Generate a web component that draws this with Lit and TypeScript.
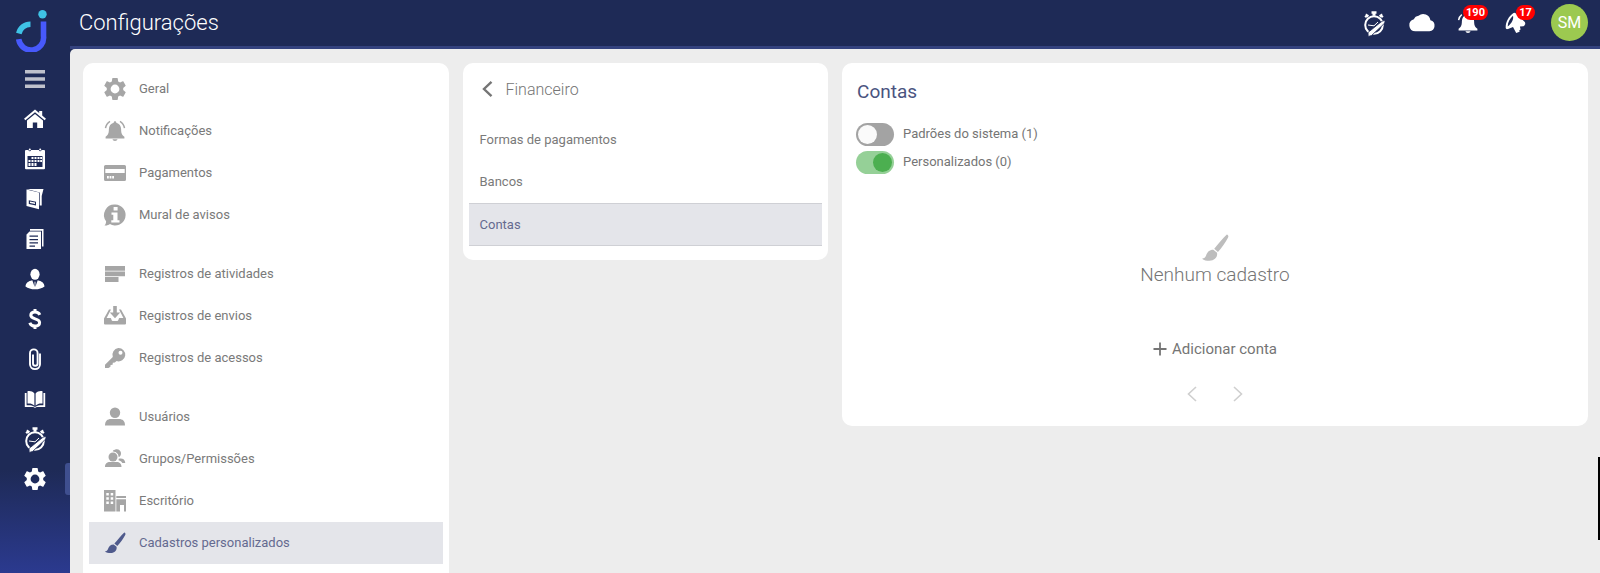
import { LitElement, html, css, svg, TemplateResult } from 'lit';
import { customElement, state } from 'lit/decorators.js';
import { classMap } from 'lit/directives/class-map.js';

const cog = svg`<path transform="translate(-2.2 -2.2) scale(1.1)" d="M12,16A4,4 0 0,1 8,12A4,4 0 0,1 12,8A4,4 0 0,1 16,12A4,4 0 0,1 12,16M19.43,12.97C19.47,12.65 19.5,12.33 19.5,12C19.5,11.67 19.47,11.34 19.43,11L21.54,9.37C21.73,9.22 21.78,8.95 21.66,8.73L19.66,5.27C19.54,5.05 19.27,4.96 19.05,5.05L16.56,6.05C16.04,5.66 15.5,5.32 14.87,5.07L14.5,2.42C14.46,2.18 14.25,2 14,2H10C9.75,2 9.54,2.18 9.5,2.42L9.13,5.07C8.5,5.32 7.96,5.66 7.44,6.05L4.95,5.05C4.73,4.96 4.46,5.05 4.34,5.27L2.34,8.73C2.21,8.95 2.27,9.22 2.46,9.37L4.57,11C4.53,11.34 4.5,11.67 4.5,12C4.5,12.33 4.53,12.65 4.57,12.97L2.46,14.63C2.27,14.78 2.21,15.05 2.34,15.27L4.34,18.73C4.46,18.95 4.73,19.03 4.95,18.95L7.44,17.94C7.96,18.34 8.5,18.68 9.13,18.93L9.5,21.58C9.54,21.82 9.75,22 10,22H14C14.25,22 14.46,21.82 14.5,21.58L14.87,18.93C15.5,18.67 16.04,18.34 16.56,17.94L19.05,18.95C19.27,19.03 19.54,18.95 19.66,18.73L21.66,15.27C21.78,15.05 21.73,14.78 21.54,14.63L19.43,12.97Z"/>`;

const bellBody = svg`<path d="M11 1.2c.9 0 1.3.7 1.3 1.5 3.2.8 4.7 3.2 4.8 6.4.1 4 .5 5.6 3.3 7.7v1.6H1.6v-1.6c2.800-2.100 3.200-3.700 3.300-7.700.1-3.200 1.600-5.600 4.800-6.400 0-.8.4-1.500 1.300-1.500zM8.500 19.200h5c-.3 1.100-1.200 1.700-2.500 1.700s-2.200-.6-2.500-1.700z"/>`;

const ICONS: Record<string, TemplateResult> = {
  menu: svg`<path fill="#bfc1cc" d="M1 2h20v3.500H1zM1 9.200h20v3.500H1zM1 16.400h20v3.500H1z"/>`,
  home: svg`<path d="M11 1.500 0 10.800l1.400 1.500L11 4.300l9.600 8 1.400-1.500-3.800-3.200V3h-3v2.100z"/><path d="M11 6 3 12.600V20h5.800v-5.500h4.400V20H19v-7.400z"/>`,
  calendar: svg`<path fill-rule="evenodd" d="M2 2h2.500a1.300 1.300 0 0 0 2.600 0h7.800a1.300 1.300 0 0 0 2.600 0H20a1 1 0 0 1 1 1v17.300a1 1 0 0 1-1 1H2a1 1 0 0 1-1-1V3a1 1 0 0 1 1-1zM3.500 8v11h15V8z"/><circle cx="5.800" cy="1.500" r="1"/><circle cx="16.200" cy="1.500" r="1"/><path d="M7.500 9h2v2h-2zM10.500 9h2v2h-2zM13.500 9h2v2h-2zM16.200 9H18v2h-1.800zM4.500 12h2v2h-2zM7.500 12h2v2h-2zM10.500 12h2v2h-2zM13.500 12h2v2h-2zM16.200 12H18v2h-1.800zM4.500 15h2v3h-2zM7.500 15h2v3h-2zM10.500 15h2v3h-2z"/>`,
  folder: svg`<path d="M2.500 1h17l-1.800 7v9.500h-2V4.500z"/><path fill-rule="evenodd" d="M2.500 1.500 15 4.500v16.700L2.500 18zM4.800 12.300v3.600l7.200 1.500v-3.600z"/><path d="m6 13.600 5 .9v1.600l-5-1z"/>`,
  docs: svg`<path d="M6 1h13.500v17.500H18V2.800H6z"/><path fill-rule="evenodd" d="M5.500 3.500H17V21H2.500V6.500zM5.500 7.500v1.300H14V7.500zM5.500 11v1.300H14V11zM5.500 14.200v1.300H14v-1.300zM5.500 17.400v1.300h5.500v-1.300z"/>`,
  person: svg`<ellipse cx="11" cy="6.300" rx="4.600" ry="5.500"/><path d="M8.300 12.300 10.700 19l-.2-4.500.5-1.500.5 1.500-.2 4.500 2.400-6.700c4 1 6.600 2.500 6.800 6.200-2.500 1.900-5.500 2.800-9.500 2.800s-7-.9-9.500-2.800c.2-3.700 2.800-5.200 6.800-6.200z"/>`,
  dollar: svg`<path fill="none" stroke="currentColor" stroke-width="3" d="M15.800 6.800C15 4.900 13.300 4 11 4 8.300 4 6.800 5.300 6.800 7.300c0 4.500 8.800 2.600 8.800 7.200 0 2.200-1.800 3.600-4.600 3.600-2.600 0-4.500-1.200-5.200-3.400M11 1v3.500M11 17.500V21"/>`,
  clip: svg`<path fill="none" stroke="currentColor" stroke-width="1.900" d="M16 5.500v10.800a5 4.800 0 0 1-10 0V5.200a3.800 3.800 0 0 1 7.600 0v10.300a2.300 2.300 0 0 1-4.600 0V6.500"/>`,
  book: svg`<path d="M10.400 5.500C8.600 3.200 6 2.800 3.500 3.200v12.400c2.600-.3 5 .2 6.900 2.200zM11.600 5.500c1.800-2.300 4.400-2.700 6.900-2.300v12.400c-2.600-.3-5 .2-6.900 2.200z"/><path d="M2.600 5H.8v14h8.600c.6 1 2.600 1 3.200 0h8.600V5h-1.800v12.300c-3.200-.2-5.700.1-7.700 1.400h-1.400c-2-1.300-4.500-1.600-7.700-1.400z"/>`,
  timer: svg`<circle cx="11" cy="13" r="8.800" fill="none" stroke="currentColor" stroke-width="2"/><path d="M8.500-.8h5v2.600h-1v2h-3v-2h-1zM3 1.500l3 1.800-1.200 2.200-.8-.5-1 1-1.600-1.600 1-1zM19 1.500l-3 1.800 1.200 2.200.8-.5 1 1 1.600-1.600-1-1z"/><path fill="none" stroke="currentColor" stroke-width="1" d="m5 13 6 .8 4-3.800"/><path stroke="#1e2a56" stroke-width=".8" d="M5 20.500 18 10c2-1.500 4.500-1.800 4-.2-.3 1.500-1.500 2.600-3 3.900L8.500 23.500l-3.300 1z"/>`,
  cog,
  cloud: svg`<path d="M6 19.500a5.500 5.500 0 0 1-1.400-10.800 5.200 5.200 0 0 1 4.200-3.200 6.500 6.500 0 0 1 10.600 4.200A5 5 0 0 1 18.500 19.500z" transform="translate(-1.300 -2.500) scale(1.120)"/>`,
  bell: svg`${bellBody}<path fill="none" stroke="currentColor" stroke-width="1.400" d="M1.600 8.200c.3-2.300 1.300-4.200 3.200-5.600"/>`,
  megaphone: svg`<path fill-rule="evenodd" d="M9.500 1C5 4 1.500 9.500 1.700 15.800c.1 1.300 1.100 1.600 2.300 1.200l5-2.100L12.200 21l3.400-1.200-.3-1.600 1.300-.8-.7-2.800 3.600-.3c1.500-.6 2.300-3 1.300-4.200L11 .8zM9 3.800c.8 3.200-.9 7.300-5.300 10.700C3.800 10 6 6.500 9 3.800z"/>`,
  alarm: svg`${bellBody}<path fill="none" stroke="currentColor" stroke-width="1.500" d="M1.500 8.200C1.900 5.200 3.400 3 6 1.300M20.500 8.200C20.100 5.200 18.600 3 16 1.300"/>`,
  card: svg`<path fill-rule="evenodd" d="M1.500 3h19A1.500 1.500 0 0 1 22 4.500v13a1.500 1.500 0 0 1-1.500 1.500h-19A1.500 1.500 0 0 1 0 17.500v-13A1.500 1.500 0 0 1 1.500 3zM1.300 7v4h19.400V7zM3 14v2.600h1.800V14zM5.600 14v2.600h1.800V14zM8.200 14v2.600H10V14z"/>`,
  info: svg`<path d="M11.300.5a10.500 10.500 0 1 1-5.400 19.600c-1.500 1.200-3.400 1.700-5.400 1.400 1-1.100 1.600-2.400 1.600-4.300A10.500 10.500 0 0 1 11.300.5z"/><path fill="#fff" d="M9.600 3h4v3.500h-4zM7.500 8.500h6v7.700h2v2.300H7.300v-2.300h2v-5.400H7.500z"/>`,
  rows: svg`<path d="M1 3h20v4.700H1zM1 8.500h20v4.700H1zM1 14h13.500v5H1z"/>`,
  inbox: svg`<path d="M9.200 1h3.600v6.500h3.400L11 13.200 5.800 7.500h3.400z"/><path d="M0 13.500 5 4.500h2L2.600 13h4c.8 0 .8 3 2 3h4.800c1.200 0 1.200-3 2-3h4L15 4.500h2l5 9v5a1 1 0 0 1-1 1H1a1 1 0 0 1-1-1z"/>`,
  key: svg`<path fill-rule="evenodd" d="M14.300 1a6.700 6.700 0 1 1-1.700 13.100l-1.800 1.500-2 .2-.2 1.900-2 .3-.2 1.800L4.500 21H1v-3.300l7.800-7.800A6.700 6.700 0 0 1 14.300 1zM16.500 3.700a2 2 0 1 0 0 4 2 2 0 0 0 0-4z"/>`,
  user: svg`<circle cx="11" cy="6.800" r="5.200"/><path d="M1 19.500c0-4.500 2.500-6.500 6-6.500h8c3.500 0 6 2 6 6.500z"/>`,
  group: svg`<circle cx="9" cy="9" r="4.500"/><path d="M1 19c0-3.500 2-5 5-5h6.500c3 0 5 1.500 5 5zM8.500 3.200A4.300 4.300 0 0 1 14.800 9.200 6 6 0 0 0 8.500 3.200zM14.800 10.800C18.500 10 21 11.500 21.300 15h-3c-.8-1.400-1.800-2.200-3.800-2.700z"/><path d="M9.200 3.300A4.200 4.200 0 1 1 15 9a6 6 0 0 0-5.800-5.700z"/>`,
  office: svg`<path fill-rule="evenodd" d="M0 0h11.500v21.500H0zM2.300 3v2.500h2.500V3zM6.700 3v2.500h2.500V3zM2.300 7.200v2.500h2.500V7.200zM6.700 7.200v2.500h2.500V7.200zM2.300 11.400v2.500h2.500v-2.500zM6.700 11.400v2.500h2.500v-2.500z"/><path d="M12.300 6H22v2H12.300zM12.300 9.300H22v12.200h-2V15h-4v6.500h-3.700z"/>`,
  brush: svg`<path d="M20.300.4c1 .3 1.600 1.300.9 2.500-1.800 3.400-5 8-7.900 11.200L10.400 11.600C13.200 8.400 17 3.500 20.300.4zM9.700 12.400l2.900 2.400c.6 3.600-2 6.200-6 6.300-2.200 0-4.300-.5-5.800-1.700 1.800-.2 2.600-.9 3.200-2.500.9-2.700 2.500-4.500 5.700-4.500z"/>`,
  back: svg`<path fill="none" stroke="currentColor" stroke-width="2.400" d="M15.500 3.800 8 11l7.500 7.200"/>`,
  prev: svg`<path fill="none" stroke="currentColor" stroke-width="1.600" d="M15 4 7.500 11l7.500 7"/>`,
  next: svg`<path fill="none" stroke="currentColor" stroke-width="1.600" d="m7 4 7.500 7L7 18"/>`,
  plus: svg`<path fill="none" stroke="currentColor" stroke-width="1.800" d="M11 4.500v13M4.500 11h13"/>`,
};

const icon = (name: string, cls = '') =>
  html`<svg class="icon ${cls}" viewBox="0 0 22 22" fill="currentColor" aria-hidden="true">${ICONS[name]}</svg>`;

const shared = css`
  * { box-sizing: border-box; }
  .icon { width: 22px; height: 22px; flex: none; display: block; overflow: visible; }
  button { font: inherit; color: inherit; background: none; border: 0; padding: 0; cursor: pointer; }
  a { color: inherit; text-decoration: none; }
  h1, h2, p, ul { margin: 0; padding: 0; font-weight: inherit; }
  li { list-style: none; }
`;

@customElement('side-nav')
class SideNav extends LitElement {
  static styles = [shared, css`
    :host {
      display: flex; flex-direction: column; align-items: stretch; color: #fff;
      background: linear-gradient(#1e2a56 0, #1e2a56 82%, #2b3a8f 100%);
    }
    .logo { height: 59px; padding: 10px 0 0 16px; }
    .logo svg { display: block; width: 31px; height: 42px; }
    .link { position: relative; width: 100%; height: 40px; padding: 0; display: flex; align-items: center; justify-content: center; }
    .current::after {
      content: ''; position: absolute; right: 0; top: 4px; width: 5px; height: 32px;
      background: #3f4f8f; border-radius: 3px 0 0 3px;
    }
  `];

  private links: [string, string][] = [
    ['home', 'Início'], ['calendar', 'Agenda'], ['folder', 'Processos'], ['docs', 'Publicações'],
    ['person', 'Contatos'], ['dollar', 'Financeiro'], ['clip', 'Documentos'], ['book', 'Biblioteca'],
    ['timer', 'Timesheet'], ['cog', 'Configurações'],
  ];

  render() {
    return html`
      <div class="logo">
        <svg viewBox="0 0 31 42" fill="none" aria-hidden="true">
          <circle cx="26.500" cy="4.200" r="4.200" fill="#3fc3e6"/>
          <path d="M2.800 23.500A12 12 0 0 1 14.500 14.200" stroke="#3fc3e6" stroke-width="5.600"/>
          <path d="M27.500 11.500v14.500a12.500 12.500 0 0 1-24.800 3.200" stroke="#4759fb" stroke-width="5.600"/>
        </svg>
      </div>
      <button class="link" aria-label="Menu">${icon('menu')}</button>
      ${this.links.map(([name, label]) => html`
        <a class=${classMap({ link: true, current: name === 'cog' })} href="#" aria-label=${label}>${icon(name)}</a>`)}
    `;
  }
}

@customElement('top-bar')
class TopBar extends LitElement {
  static styles = [shared, css`
    :host {
      display: flex; align-items: center; justify-content: space-between; height: 49px;
      padding: 0 12px 1px 9px; color: #fff; background: #1e2a56; border-bottom: 3px solid #34427e;
    }
    h1 { font-size: 22px; line-height: 28px; font-weight: 300; }
    .actions { display: flex; align-items: center; gap: 25px; }
    .action { position: relative; }
    .badge {
      position: absolute; right: -9px; top: -7px; min-width: 19px; height: 15px; padding: 0 3px;
      border-radius: 8px; background: #f00; font-size: 11px; line-height: 15px; font-weight: 700;
    }
    .avatar { width: 37px; height: 37px; border-radius: 50%; background: #9cc950; font-size: 16px; }
  `];

  render() {
    return html`
      <h1>Configurações</h1>
      <div class="actions">
        <button class="action" aria-label="Timesheet">${icon('timer')}</button>
        <button class="action" aria-label="Nuvem">${icon('cloud')}</button>
        <button class="action" aria-label="Notificações">${icon('bell')}<span class="badge">190</span></button>
        <button class="action" aria-label="Novidades">${icon('megaphone')}<span class="badge">17</span></button>
        <button class="avatar">SM</button>
      </div>
    `;
  }
}

@customElement('app-root')
class AppRoot extends LitElement {
  static styles = [shared, css`
    :host {
      display: grid; grid-template-columns: 70px minmax(0, 1fr); height: 100vh; overflow: hidden;
      background: #1e2a56; color: #757575; font-family: Roboto, sans-serif; font-size: 13px; line-height: 20px;
    }
    .main { display: flex; flex-direction: column; min-width: 0; }
    .content {
      flex: 1; min-height: 0; display: grid; grid-template-columns: 49fr 49fr 100fr; gap: 14px;
      align-items: start; padding: 14px 12px 0 13px; background: #ededed; border-top-left-radius: 5px;
    }
    .card { background: #fff; border-radius: 10px; min-width: 0; }
    .settings { height: 100%; padding: 5px 6px 0; border-radius: 10px 10px 0 0; }
    .group + .group { margin-top: 17px; }
    .row { display: flex; align-items: center; height: 42px; gap: 13px; padding: 0 15px; color: #7a7a7a; }
    .row .icon { color: #a6a6a6; }
    .row.selected { background: #e4e5ea; color: #646a90; }
    .row.selected .icon { color: #4f5a8c; }
    .submenu { padding: 0 6px 14px; }
    .head { display: flex; align-items: center; gap: 8px; height: 56px; padding: 0 12px 4px 7px; }
    .head h2 { padding-top: 2px; font-size: 16px; font-weight: 300; }
    .submenu .row { padding: 0 11px; }
    .submenu .selected { border: solid #cfd0d5; border-width: 1px 0; height: 43px; }
    .detail { display: flex; flex-direction: column; padding: 17px 14px 21px; }
    .detail h2 { font-size: 19px; line-height: 24px; color: #4a547f; padding-left: 1px; margin-bottom: 16px; }
    .switch { display: flex; align-items: center; gap: 9px; height: 28px; cursor: pointer; }
    .switch input {
      appearance: none; position: relative; flex: none; width: 38px; height: 23px; margin: 0;
      border-radius: 12px; background: #a3a3a3; cursor: pointer;
    }
    .switch input::before {
      content: ''; position: absolute; left: 2px; top: 2px; width: 19px; height: 19px;
      border-radius: 50%; background: #fafafa;
    }
    .switch input:checked { background: #95d097; }
    .switch input:checked::before { left: 17px; background: #4caf50; }
    .empty { display: flex; flex-direction: column; align-items: center; padding-top: 58px; }
    .big { width: 28px; height: 28px; color: #bdbdbd; }
    .empty p { margin-top: 1px; font-size: 19px; line-height: 24px; font-weight: 300; }
    .add { display: flex; align-items: center; gap: 1px; margin-top: 52px; padding-right: 4px; height: 20px; font-size: 15px; }
    .pager { display: flex; gap: 24px; margin-top: 24px; color: #cfcfcf; }
    .edge {
      position: fixed; right: 0; top: 457px; width: 2px; height: 83px; background: #000;
    }
  `];

  @state() private section = 'Cadastros personalizados';
  @state() private item = 'Contas';

  private groups: [string, string][][] = [
    [['cog', 'Geral'], ['alarm', 'Notificações'], ['card', 'Pagamentos'], ['info', 'Mural de avisos']],
    [['rows', 'Registros de atividades'], ['inbox', 'Registros de envios'], ['key', 'Registros de acessos']],
    [['user', 'Usuários'], ['group', 'Grupos/Permissões'], ['office', 'Escritório'], ['brush', 'Cadastros personalizados']],
  ];

  render() {
    return html`
      <side-nav></side-nav>
      <div class="main">
        <top-bar></top-bar>
        <main class="content">
          <nav class="card settings">
            ${this.groups.map(group => html`
              <ul class="group">
                ${group.map(([name, label]) => html`
                  <li><a href="#" class=${classMap({ row: true, selected: label === this.section })}
                    @click=${() => (this.section = label)}>${icon(name)}${label}</a></li>`)}
              </ul>`)}
          </nav>
          <nav class="card submenu">
            <div class="head">
              <button aria-label="Voltar">${icon('back')}</button>
              <h2>Financeiro</h2>
            </div>
            <ul>
              ${['Formas de pagamentos', 'Bancos', 'Contas'].map(label => html`
                <li><a href="#" class=${classMap({ row: true, selected: label === this.item })}
                  @click=${() => (this.item = label)}>${label}</a></li>`)}
            </ul>
          </nav>
          <section class="card detail">
            <h2>Contas</h2>
            <label class="switch"><input type="checkbox" role="switch">Padrões do sistema (1)</label>
            <label class="switch"><input type="checkbox" role="switch" checked>Personalizados (0)</label>
            <div class="empty">
              ${icon('brush', 'big')}
              <p>Nenhum cadastro</p>
              <button class="add">${icon('plus')}Adicionar conta</button>
              <div class="pager">
                <button aria-label="Anterior">${icon('prev')}</button>
                <button aria-label="Próxima">${icon('next')}</button>
              </div>
            </div>
          </section>
        </main>
      </div>
      <div class="edge"></div>
    `;
  }
}
